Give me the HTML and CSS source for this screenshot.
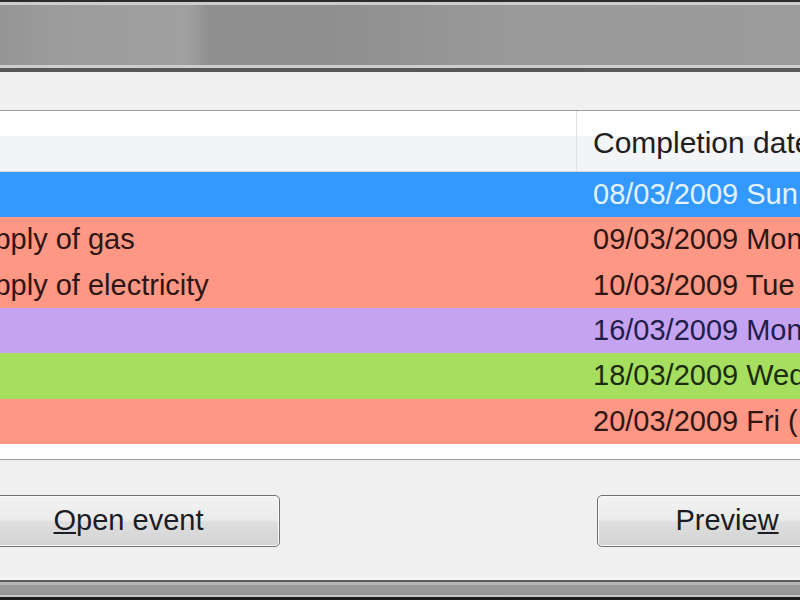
FILE: index.html
```html
<!DOCTYPE html>
<html>

<head>
    <title>Events</title>
    <link rel="stylesheet" href="styles.css">
</head>

<body>
    <div class="titlebar">
        <div class="titlebar-glass"></div>
    </div>

    <div class="dialog">
        <div class="list">
            <div class="list-header">
                <div class="col-head col-name"></div>
                <div class="col-head col-date">Completion date</div>
            </div>

            <div class="row row-selected">
                <div class="cell"></div>
                <div class="cell cell-date">08/03/2009 Sun</div>
            </div>
            <div class="row row-overdue">
                <div class="cell">Supply of gas</div>
                <div class="cell cell-date">09/03/2009 Mon</div>
            </div>
            <div class="row row-overdue">
                <div class="cell">Supply of electricity</div>
                <div class="cell cell-date">10/03/2009 Tue</div>
            </div>
            <div class="row row-planned">
                <div class="cell"></div>
                <div class="cell cell-date">16/03/2009 Mon</div>
            </div>
            <div class="row row-done">
                <div class="cell"></div>
                <div class="cell cell-date">18/03/2009 Wed</div>
            </div>
            <div class="row row-overdue">
                <div class="cell"></div>
                <div class="cell cell-date">20/03/2009 Fri (</div>
            </div>
        </div>

        <div class="buttons">
            <button class="button button-open"><u>O</u>pen event</button>
            <button class="button button-preview">Previe<u>w</u></button>
        </div>
    </div>

    <div class="bottombar"></div>
</body>

</html>
```

FILE: styles.css
```css
/* Zoomed-in Vista style event list dialog */
body {
    margin: 0;
    padding: 0;
    background-color: #f0f0f0;
    font-family: "Liberation Sans", Arial, sans-serif;
    font-size: 29px;
    overflow: hidden;
    height: 600px;
}

/* window frame at the top */
.titlebar {
    height: 60px;
    border-top: 2px solid #2b2b2b;
    border-bottom: 4px solid #585858;
    padding: 3px 0;
    background-color: #cdcdcd;
}

.titlebar-glass {
    height: 60px;
    background: linear-gradient(to right,
        #959595 0px, #9c9c9c 60px, #a0a0a0 185px, #9a9a9a 195px,
        #8f8f8f 210px, #8f8f8f 330px, #949494 420px, #9a9a9a 520px, #9b9b9b 800px);
}

.dialog {
    margin-left: -40px;
    width: 900px;
}

.list {
    margin-top: 38px;
    border: 1px solid #9a9ea6;
    background-color: #ffffff;
    padding-bottom: 15px;
}

.list-header {
    display: grid;
    grid-template-columns: 616px 1fr;
    height: 60px;
    border-bottom: 1px solid #d8dadd;
    background: linear-gradient(to bottom, #ffffff 0%, #ffffff 42%, #f3f4f5 42%, #f3f4f5 100%);
}

.col-head {
    display: flex;
    align-items: center;
    padding-top: 3px;
    color: #1e1e1e;
}

.col-name {
    border-right: 1px solid #e2e3e5;
}

.col-date {
    padding-left: 16px;
    font-size: 30px;
    white-space: nowrap;
}

.row {
    display: grid;
    grid-template-columns: 616px 1fr;
    height: 45.33px;
}

.cell {
    display: flex;
    align-items: center;
    padding-left: 0;
    text-indent: -2px;
    white-space: nowrap;
    overflow: hidden;
}

.cell-date {
    padding-left: 16px;
    text-indent: 0;
}

.row-selected {
    background-color: #3399ff;
    color: #e4f1ff;
}

.row-overdue {
    background-color: #fe9784;
    color: #2e1614;
}

.row-planned {
    background-color: #c4a3f1;
    color: #221d4a;
}

.row-done {
    background-color: #a6de5f;
    color: #1c2c10;
}

.buttons {
    display: flex;
    justify-content: space-between;
    padding: 35px 3px 31px 17px;
}

.button {
    height: 52px;
    border: 1px solid #707070;
    border-radius: 5px;
    background: linear-gradient(to bottom, #f3f3f3 0%, #ebebeb 48%, #dedede 52%, #d3d3d3 100%);
    box-shadow: inset 0 0 0 1px #fafafa;
    font-family: "Liberation Sans", Arial, sans-serif;
    font-size: 29px;
    color: #1c1c24;
    padding: 0;
}

.button-open {
    width: 303px;
}

.button-preview {
    width: 260px;
}

/* window frame at the bottom */
.bottombar {
    height: 22px;
    background: linear-gradient(to bottom,
        #f8f8f8 0px, #f8f8f8 2px,
        #5a5a5a 2px, #5a5a5a 4px,
        #b6b6b6 4px, #b6b6b6 7px,
        #9a9a9a 7px, #979797 17px,
        #c6c6c6 17px, #c6c6c6 19px,
        #1c1c1c 19px, #1c1c1c 22px);
}
```
